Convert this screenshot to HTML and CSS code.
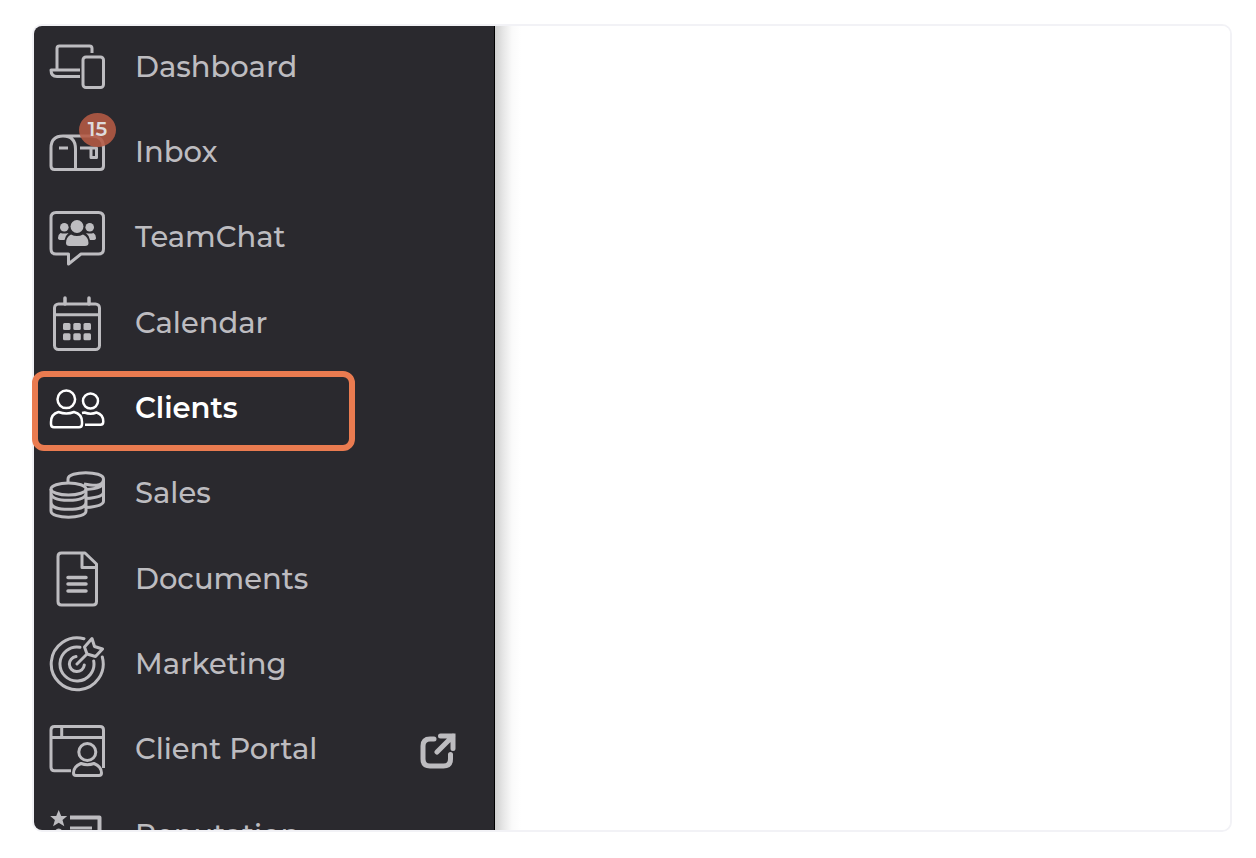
FILE: index.html
```html
<!DOCTYPE html>
<html lang="en">
<head>
<meta charset="utf-8">
<meta name="viewport" content="width=device-width, initial-scale=1">
<title>Clients</title>
<link rel="stylesheet" href="styles.css">
</head>
<body>
<div class="frame">
  <nav class="sidebar" aria-label="Main">
    <ul class="menu">
      <li class="item"><a class="link" href="#">
        <svg class="icon" viewBox="0 0 56 85" aria-hidden="true"><path d="M8 46V25.500q0-2.500 2.500-2.500H40.500q2.500 0 2.500 2.500V30M31 47H2Q2 53.500 8 53.500H31"/><rect x="34" y="34" width="20.500" height="30.500" rx="3"/></svg>
        <span class="label">Dashboard</span></a></li>
      <li class="item"><a class="link" href="#">
        <svg class="icon" viewBox="0 0 56 85" aria-hidden="true"><path d="M2 58V40Q2 28 14 28H43Q54.500 28 54.500 40V58Q54.500 61.500 51 61.500H5.500Q2 61.500 2 58ZM14 28Q26.500 28 26.500 41V61M10 40H19M31 40H47.500V49.500H42V40"/></svg>
        <span class="label">Inbox</span><span class="badge">15</span></a></li>
      <li class="item"><a class="link" href="#">
        <svg class="icon" viewBox="0 0 56 85" aria-hidden="true"><path d="M7 19.500H49.500Q54.500 19.500 54.500 24.500V56Q54.500 61 49.500 61H32L19.500 71V61H7Q2 61 2 56V24.500Q2 19.500 7 19.500Z"/><g class="solid"><circle cx="28" cy="33.500" r="6.500"/><circle cx="15.300" cy="34.300" r="4.300"/><circle cx="40.700" cy="34.300" r="4.300"/><path d="M22 41.500Q28 44.500 34 41.500Q39.500 44 39.500 50Q39.500 53 36 53H20.500Q17 53 17 50Q17 44 22 41.500ZM11.500 40Q15 41 19.500 40Q16 43 15.500 47H12Q9 47 9 45Q9 41.500 11.500 40ZM44.500 40Q41 41 37 40Q40.500 43 41 47H44Q47 47 47 45Q47 41.500 44.500 40Z"/></g></svg>
        <span class="label">TeamChat</span></a></li>
      <li class="item"><a class="link" href="#">
        <svg class="icon" viewBox="0 0 56 85" aria-hidden="true"><rect x="5.500" y="25" width="45" height="45.500" rx="4"/><path d="M5 35.700H51"/><path d="M16 19V25M40 19V25" stroke-linecap="round" stroke-width="3.500"/><g class="solid"><rect x="14" y="44" width="7.500" height="7" rx="1.500"/><rect x="24.300" y="44" width="7.500" height="7" rx="1.500"/><rect x="34.500" y="44" width="7.500" height="7" rx="1.500"/><rect x="14" y="54.300" width="7.500" height="7" rx="1.500"/><rect x="24.300" y="54.300" width="7.500" height="7" rx="1.500"/><rect x="34.500" y="54.300" width="7.500" height="7" rx="1.500"/></g></svg>
        <span class="label">Calendar</span></a></li>
      <li class="item"><a class="link current marked" href="#" aria-current="page">
        <svg class="icon thin" viewBox="0 0 56 85" aria-hidden="true"><circle cx="17.300" cy="35.300" r="8.800"/><circle cx="41.500" cy="37" r="7.500"/><path d="M9.500 48Q17.500 51 25 48Q33 50 33 58V60Q33 63.300 30 63.300H5Q2 63.300 2 60V58Q2 50 9.500 48ZM33 49L35.500 48.500Q41.700 51 47.500 48.500Q54.300 50.500 54.300 57.500Q54.300 60.800 51.500 60.800H36"/></svg>
        <span class="label">Clients</span></a></li>
      <li class="item"><a class="link" href="#">
        <svg class="icon" viewBox="0 0 56 85" aria-hidden="true"><ellipse cx="19.500" cy="40" rx="17.500" ry="6"/><path d="M2 40V62C2 70.300 37 70.300 37 62V40M2 44C2 50 10 51.300 19.500 51.300S37 50 37 44M2 53C2 59.500 10 60.300 19.500 60.300S37 59.500 37 53M19 33V30C19 21.500 54.500 21.500 54.500 30S43 36.500 35 35M54.500 30V52Q54.500 57.500 37 58.500M54.500 33Q54.500 39.500 37 40.500M54.500 43Q54.500 48.500 37 49.500"/></svg>
        <span class="label">Sales</span></a></li>
      <li class="item"><a class="link" href="#">
        <svg class="icon" viewBox="0 0 56 85" aria-hidden="true"><path d="M12.500 18H36L47.500 29V66.500Q47.500 70 44 70H12.500Q9 70 9 66.500V21.500Q9 18 12.500 18ZM33 18V32.500H47"/><path d="M19 42.500H37M19 49H37M19 56H37" stroke-linecap="round" stroke-width="3.500"/></svg>
        <span class="label">Documents</span></a></li>
      <li class="item"><a class="link" href="#">
        <svg class="icon" viewBox="0 0 56 85" aria-hidden="true"><path d="M35 18.700A26 26 0 1 0 53.300 37M31 27.300A17 17 0 1 0 44.700 41M27 36.600A7.500 7.500 0 1 0 35.300 45M28 44L38 34M38 34L35.500 27L43 18.500L45.500 26.500L53.500 29L46.500 36.500Z" stroke-linecap="round" stroke-linejoin="round"/></svg>
        <span class="label">Marketing</span></a></li>
      <li class="item"><a class="link" href="#">
        <svg class="icon" viewBox="0 0 56 85" aria-hidden="true"><path d="M22 65.700H5.500Q2 65.700 2 62.200V25Q2 21.500 5.500 21.500H51Q54.500 21.500 54.500 25V63M2 32.500H54M12.700 21.500V32"/><circle cx="38.300" cy="47" r="8.500"/><path d="M32 58.500Q38.300 61 45 58.500Q52.500 61.500 52.500 68Q52.500 70.500 50 70.500H27Q24.500 70.500 24.500 68Q24.500 61.500 32 58.500Z"/></svg>
        <span class="label">Client Portal</span>
        <svg class="external" viewBox="0 0 36 36" aria-hidden="true"><path d="M14 6H10Q3 6 3 13V26Q3 33 10 33H23.500Q30.500 33 30.500 26V21.500"/><path d="M17 19L33 3M20.500 3H33V15.500"/></svg></a></li>
      <li class="item"><a class="link" href="#">
        <svg class="icon" viewBox="0 0 56 85" aria-hidden="true"><path class="solid" d="M9.700 19L12.200 25H18.200L13.500 29L15.300 35.300L9.700 31.800L4.100 35.300L5.900 29L1.200 25H7.200Z"/><circle class="solid" cx="9.700" cy="41" r="3.500"/><path d="M21 26.500H50.500V66H9V48" stroke-width="4"/><path d="M21 37H43M21 46H43"/></svg>
        <span class="label">Reputation</span></a></li>
    </ul>
  </nav>
  <main class="content"></main>
</div>
</body>
</html>
```
FILE: styles.css
```css
*,
*::after { box-sizing: border-box; }

body {
  margin: 0;
  padding: 24px 24px 26px 32px;
  background: #fff;
  font-family: Montserrat, Inter, "Liberation Sans", sans-serif;
}

.frame {
  display: flex;
  height: calc(100vh - 50px);
  border: 2px solid #f2f2f6;
  border-radius: 10px;
}

.sidebar {
  flex: 0 0 461px;
  overflow-x: visible;
  overflow-y: clip;
  background: #2a292e;
  border-right: 1px solid #000;
  border-radius: 8px 0 0 8px;
}

.menu {
  list-style: none;
  margin: -3px 0 0;
  padding: 0;
}

.item { height: 85px; }
.item:nth-child(3n) { height: 86px; }

.link {
  position: relative;
  display: flex;
  align-items: center;
  gap: 30px;
  height: 100%;
  padding: 0 38px 0 15px;
  color: #bdbcc0;
  font-size: 29px;
  font-weight: 500;
  line-height: 40px;
  text-decoration: none;
}

.label { padding-top: 2px; }

.current {
  color: #fff;
  font-weight: 600;
}

.marked::after {
  content: "";
  position: absolute;
  top: 7px;
  left: -2px;
  width: 323px;
  height: 80px;
  border: 6px solid #ea7b50;
  border-radius: 12px;
}

.icon {
  flex: none;
  align-self: flex-start;
  width: 56px;
  height: 85px;
  fill: none;
  stroke: currentColor;
  stroke-width: 3;
  stroke-linejoin: round;
}

.thin { stroke-width: 2.5; }

.solid {
  fill: currentColor;
  stroke: none;
}

.badge {
  position: absolute;
  top: 5px;
  left: 45px;
  width: 37px;
  height: 34px;
  border-radius: 50%;
  background: rgb(181 90 68 / 88%);
  color: #dedbdc;
  font-size: 20px;
  font-weight: 600;
  line-height: 32px;
  text-align: center;
}

.external {
  width: 36px;
  height: 36px;
  margin-left: auto;
  margin-top: 6px;
  fill: none;
  stroke: currentColor;
  stroke-width: 5;
  stroke-linecap: round;
}

.content {
  flex: 1;
  border-radius: 0 8px 8px 0;
  background: linear-gradient(to right, #cfcfcf, #e6e6e6 8px, #fafafa 17px, #fff 26px);
}
```
